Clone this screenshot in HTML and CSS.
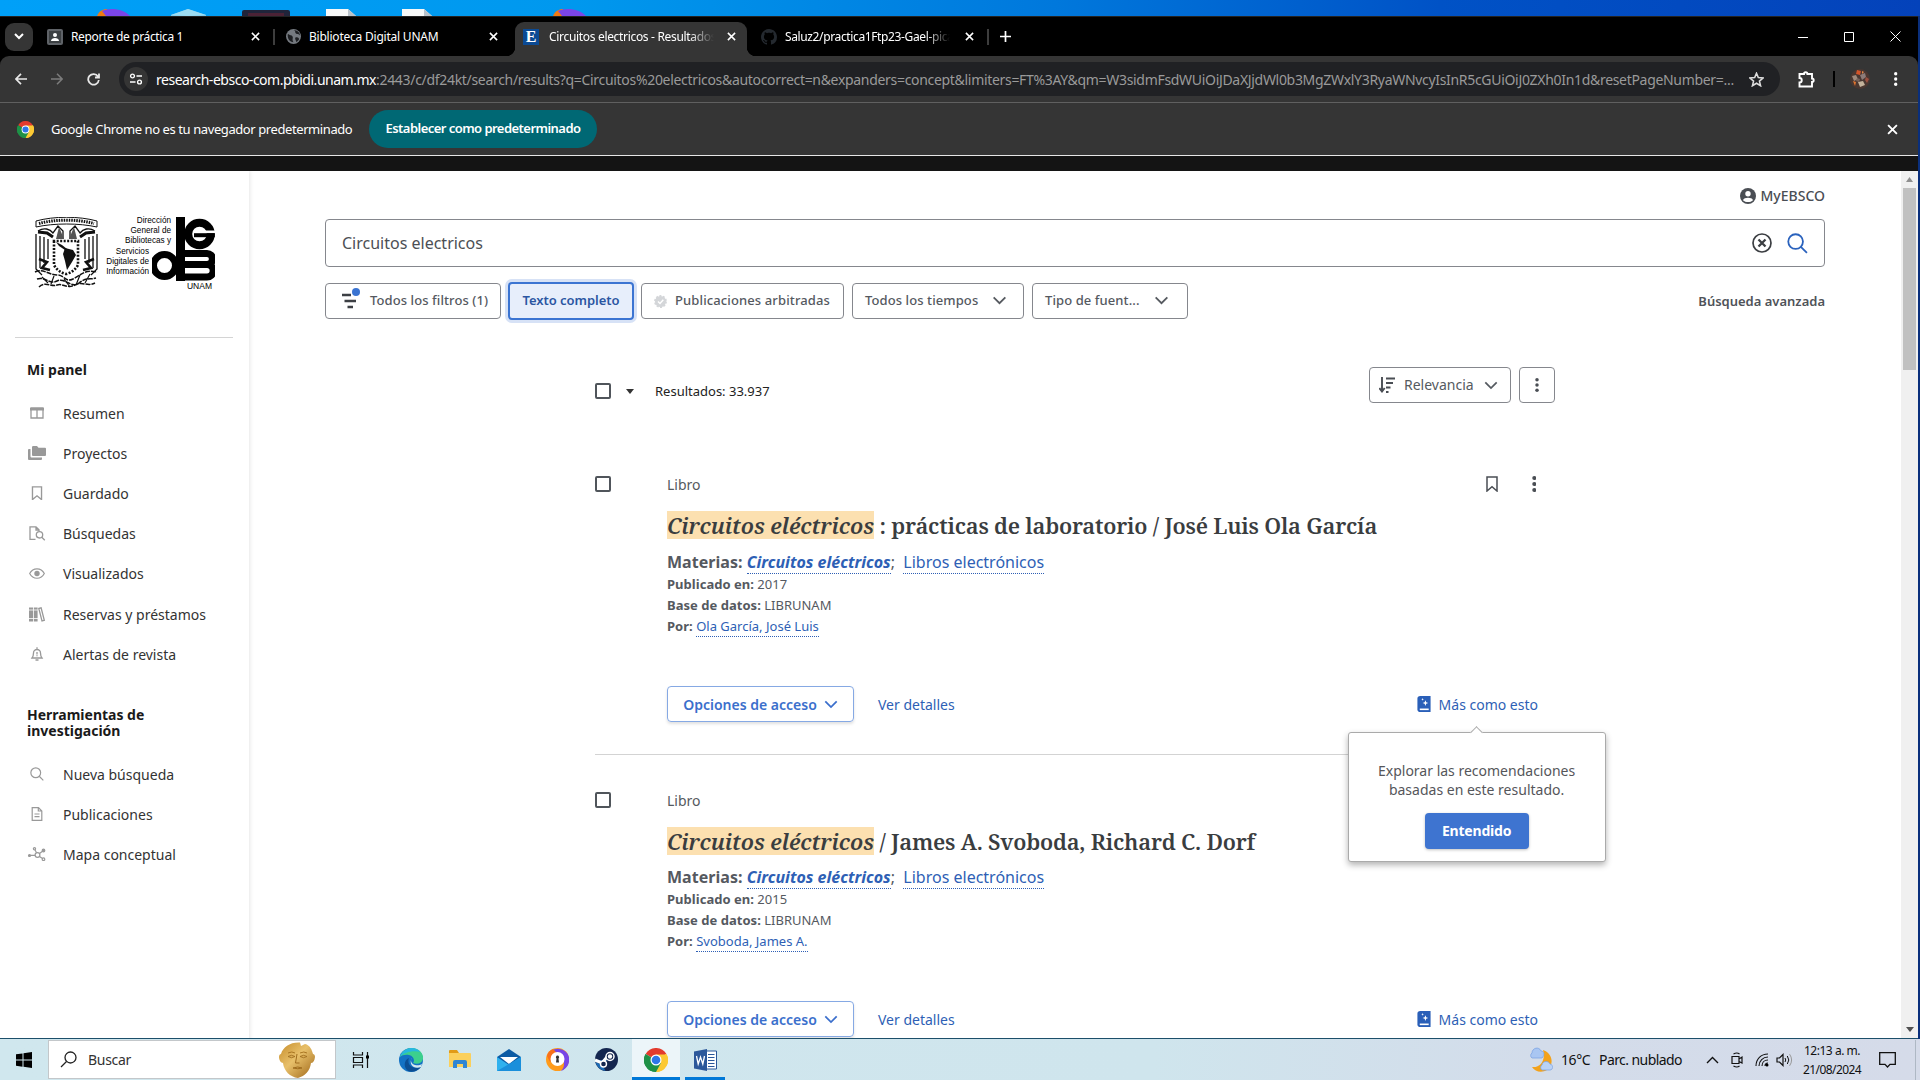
FILE: index.html
```
<!DOCTYPE html>
<html lang="es">
<head>
<meta charset="utf-8">
<title>Circuitos electricos - Resultados</title>
<link rel="stylesheet" href="styles.css">
</head>
<body>
<svg class="defs" aria-hidden="true">
  <symbol id="i-x" viewBox="0 0 10 10"><path d="M1 1l8 8M9 1l-8 8" fill="none" stroke="currentColor" stroke-width="1.7"/></symbol>
  <symbol id="i-chev" viewBox="0 0 16 10"><path d="M1.500 1.500L8 8l6.500-6.500" fill="none" stroke="currentColor" stroke-width="2"/></symbol>
  <symbol id="i-dots" viewBox="0 0 4 16"><circle cx="2" cy="2" r="2"/><circle cx="2" cy="8" r="2"/><circle cx="2" cy="14" r="2"/></symbol>
  <symbol id="i-bookmark" viewBox="0 0 12 16"><path d="M1 1h10v14l-5-4.200L1 15z" fill="none" stroke="currentColor" stroke-width="1.500"/></symbol>
  <symbol id="i-search" viewBox="0 0 20 20"><circle cx="8.200" cy="8.200" r="7"/><path d="M13.200 13.200L19 19"/></symbol>
  <symbol id="i-chrome" viewBox="0 0 24 24">
    <path d="M12 12L1.600 6A12 12 0 0 1 22.400 6z" fill="#e33b2e"/>
    <path d="M12 12L22.400 6A12 12 0 0 1 12 24z" fill="#fcc934"/>
    <path d="M12 12v12A12 12 0 0 1 1.600 6z" fill="#1e9147"/>
    <path d="M12 6.500h10.700A12 12 0 0 1 12 24l4.800-9z" fill="#fcc934"/>
    <path d="M7.200 14.800L1.600 6a12 12 0 0 0 10.400 18l4.900-9z" fill="#1e9147"/>
    <circle cx="12" cy="12" r="5.500" fill="#fff"/><circle cx="12" cy="12" r="4.300" fill="#2e76e8"/>
  </symbol>
  <symbol id="i-more" viewBox="0 0 14 17"><path d="M3 0h11v17H3a3 3 0 0 1-3-3V3a3 3 0 0 1 3-3z" fill="#2a5fb8"/><path d="M2.500 13.300H12V15H2.500z" fill="#fff"/><path d="M8.500 4.500l.8 2.200 2.200.8-2.200.8-.8 2.200-.8-2.200-2.200-.8 2.200-.8zM5.500 2.200l.4 1 1 .4-1 .4-.4 1-.4-1-1-.4 1-.4z" fill="#fff"/></symbol>
</svg>

<div class="desktop">
  <svg width="600" height="16" viewBox="0 0 600 16">
    <g><path d="M97 16c2-5 6-7 10-7l3 7z" fill="#f07a13"/><path d="M102 11c8-4 22-2 28 5h-24z" fill="#7b45e8"/></g>
    <path d="M171 15l17-6 18 6v1h-35z" fill="#7fcdec"/><path d="M171 15l17-6 18 6-18 1z" fill="#9cdcf2"/>
    <rect x="242" y="10" width="48" height="8" rx="2" fill="#20243a"/><rect x="248" y="13" width="36" height="3" fill="#4b2235"/>
    <path d="M326 9h22l8 7h-30zM402 9h22l8 7h-30z" fill="#f7f8f8"/><path d="M348 9v7h8zM424 9v7h8z" fill="#b9c2ca"/>
    <g><path d="M553 16c2-5 6-7 10-7l3 7z" fill="#f07a13"/><path d="M558 11c8-4 22-2 28 5h-24z" fill="#7b45e8"/></g>
  </svg>
</div>

<div class="window">
  <header class="tabstrip">
    <div class="tabsearch"><svg width="10" height="7" viewBox="0 0 10 7"><path d="M1 1l4 4 4-4" fill="none" stroke="#fff" stroke-width="2"/></svg></div>
    <div class="tab t1">
      <svg class="fav" width="16" height="16" viewBox="0 0 16 16"><rect width="16" height="16" rx="2" fill="#5f6368"/><rect x="2" y="2" width="12" height="12" fill="#3c4043"/><circle cx="8" cy="6" r="2" fill="#fff"/><path d="M4 12c0-4 8-4 8 0z" fill="#fff"/></svg>
      <span class="label">Reporte de práctica 1</span><svg class="x" width="9" height="9"><use href="#i-x"/></svg>
    </div>
    <i class="sep"></i>
    <div class="tab t2">
      <svg class="fav" width="15" height="15" viewBox="0 0 16 16"><circle cx="8" cy="8" r="8" fill="#757a80"/><path d="M2 5c2 2 4 1 5 3s-1 3 1 6c-4 0-7-4-6-9zM8 1c3 1 1 3 3 4s3 0 4 2c0-3-3-6-7-6zM10 9c3-1 4 1 4 2-1 2-2 2-3 3 0-2-2-3-1-5z" fill="#1d1f22"/></svg>
      <span class="label">Biblioteca Digital UNAM</span><svg class="x" width="9" height="9"><use href="#i-x"/></svg>
    </div>
    <div class="tab active">
      <span class="fav-e">E</span>
      <span class="label fade">Circuitos electricos - Resultados</span><svg class="x" width="9" height="9"><use href="#i-x"/></svg>
    </div>
    <div class="tab t4">
      <svg class="fav" width="16" height="16" viewBox="0 0 16 16"><path fill="#24292f" d="M8 0C3.580 0 0 3.580 0 8c0 3.540 2.290 6.530 5.470 7.590.4.070.55-.17.55-.38 0-.19-.01-.82-.01-1.490-2.010.37-2.530-.49-2.690-.94-.09-.23-.48-.94-.82-1.130-.28-.15-.68-.52-.01-.53.63-.01 1.080.58 1.230.82.72 1.210 1.870.87 2.330.66.070-.52.28-.87.51-1.070-1.780-.2-3.640-.89-3.640-3.950 0-.87.31-1.590.82-2.150-.08-.2-.36-1.020.08-2.120 0 0 .67-.21 2.200.82.64-.18 1.320-.27 2-.27s1.360.09 2 .27c1.530-1.040 2.200-.82 2.200-.82.44 1.100.16 1.920.08 2.120.51.56.82 1.270.82 2.150 0 3.070-1.870 3.750-3.650 3.950.29.25.54.73.54 1.480 0 1.070-.01 1.930-.01 2.200 0 .21.15.46.55.38A8 8 0 0 0 16 8c0-4.420-3.580-8-8-8z"/></svg>
      <span class="label fade">Saluz2/practica1Ftp23-Gael-pica</span><svg class="x" width="9" height="9"><use href="#i-x"/></svg>
    </div>
    <i class="sep"></i>
    <svg class="plus" width="11" height="11" viewBox="0 0 11 11"><path d="M5.500 0v11M0 5.500h11" stroke="#fff" stroke-width="1.700"/></svg>
    <div class="winbtns">
      <svg width="10" height="10"><path d="M0 5.500h10" stroke="#fff"/></svg>
      <svg width="10" height="10"><path d="M.5.5h9v9h-9z" fill="none" stroke="#fff"/></svg>
      <svg width="11" height="11"><path d="M.5.500l10 10M10.500.500l-10 10" stroke="#fff"/></svg>
    </div>
  </header>

  <div class="toolbar">
    <svg class="back" width="12" height="12" viewBox="0 0 12 12"><path d="M12 6H1M6 .8L.9 6 6 11.200" fill="none" stroke="#e8e8e8" stroke-width="1.700"/></svg>
    <svg class="fwd" width="12" height="12" viewBox="0 0 12 12"><path d="M0 6h11M6 .8L11.100 6 6 11.200" fill="none" stroke="#7c7c7c" stroke-width="1.500"/></svg>
    <svg class="reload" width="13" height="13" viewBox="0 0 13 13"><path d="M11 3.500A5.300 5.300 0 1 0 11.800 7M12 .5v4H8" fill="none" stroke="#e8e8e8" stroke-width="1.800"/></svg>
    <div class="omnibox">
      <span class="siteinfo"><svg width="14" height="12" viewBox="0 0 14 12"><path d="M7.500 3H13M1 9h5.500" stroke="#fff" stroke-width="1.500"/><circle cx="3.500" cy="3" r="1.900" fill="none" stroke="#fff" stroke-width="1.400"/><circle cx="10.500" cy="9" r="1.900" fill="none" stroke="#fff" stroke-width="1.400"/></svg></span>
      <span class="url"><b>research-ebsco-com.pbidi.unam.mx</b><span>:2443/c/df24kt/search/results?q=Circuitos%20electricos&amp;autocorrect=n&amp;expanders=concept&amp;limiters=FT%3AY&amp;qm=W3sidmFsdWUiOiJDaXJjdWl0b3MgZWxlY3RyaWNvcyIsInR5cGUiOiJ0ZXh0In1d&amp;resetPageNumber=...</span></span>
      <svg class="star" width="15" height="15" viewBox="0 0 24 24"><path d="M12 2l2.900 7 7.600.6-5.800 5 1.800 7.400L12 18l-6.500 4 1.800-7.400-5.800-5L9.100 9z" fill="none" stroke="#ddd" stroke-width="2.500"/></svg>
    </div>
    <svg class="puzzle" width="17" height="17" viewBox="0 0 17 17"><path d="M1.500 3H6a1.700 1.700 0 0 1 3.400 0H14v4.500a1.700 1.700 0 0 1 0 3.400v4.600H1.500v-4a2.200 2.200 0 0 0 0-4.500z" fill="none" stroke="#fff" stroke-width="1.900"/></svg>
    <i class="tbsep"></i>
    <svg class="avatar" width="20" height="20" viewBox="0 0 20 20"><circle cx="10" cy="10" r="10" fill="#4a3731"/><path d="M7 1l4 1-1 4-4-1z" fill="#d4552a"/><path d="M2 7l4-1 2 4-4 2z" fill="#a08b7d"/><path d="M10 6l5-2 1 4-4 3z" fill="#8d7c79"/><path d="M3 12l3 1-1 4z" fill="#e2762f"/><path d="M8 13l5-1 2 4-5 2z" fill="#c3b29b"/><path d="M16 8l3 2-2 4-2-3z" fill="#9b4f3f"/><path d="M7 9l3 1-1 3-3-1z" fill="#77635c"/><path d="M12 2l2 1-2 2z" fill="#e58a4a"/></svg>
    <svg class="menu" width="3.500" height="14" fill="#fff"><use href="#i-dots"/></svg>
  </div>

  <div class="infobar">
    <svg width="17" height="17"><use href="#i-chrome"/></svg>
    <span class="msg">Google Chrome no es tu navegador predeterminado</span>
    <span class="default">Establecer como predeterminado</span>
    <svg class="x" width="11" height="11"><use href="#i-x"/></svg>
  </div>
  <div class="blackbar"></div>

  <div class="page">
    <aside class="side">
      <div class="logo">
        <svg width="65" height="73" viewBox="0 0 65 73" fill="none" stroke="#111">
          <path d="M2 4C20-1 45-1 63 4v6C45 6 20 6 2 10z" stroke-width="1"/><path d="M5 6.500C22 2 43 2 60 6.500" stroke-width="3" stroke-dasharray="1.500 1"/>
          <path d="M4 14c6-4 12-2 15 2l5-7 5 5v8M61 14c-6-4-12-2-15 2l-5-7-5 5v8" stroke-width="1.300"/>
          <path d="M4 15l9 1 6 4M61 15l-9 1-6 4" stroke-width="3"/>
          <path d="M25 10l-3 12h8zM40 10l3 12h-8z" fill="#555" stroke="none"/>
          <path d="M2 17v35l6 6M6 19v32M10 20v26M14 22v20M63 17v35l-6 6M59 19v32M55 20v26M51 22v20" stroke-width="1.300"/>
          <path d="M20 24v24q4 7 12 9 8-2 12-9V24z" stroke-width="2.600" stroke-dasharray="2 1.500"/>
          <path d="M22 25l6 3 5 4-2 1-6-4z" fill="#111" stroke="none"/><path d="M31 31l8 2 3 5-4 7-5 8-2-9-2-7z" fill="#111" stroke="none"/>
          <path d="M5 42l8 3-5 6 8 2M60 42l-8 3 5 6-8 2" stroke-width="2.600"/>
          <path d="M1 55c8-4 14 3 22 3s8 8 16 4 12-10 24-7M3 62c8-3 12 6 20 2s14 8 22 2 10-3 17-5M5 70c6-6 12 0 18-2s10 4 18 0 12 2 20-2" stroke-width="1.500" stroke-dasharray="5 1"/>
          <path d="M8 60l6 6M20 59l-3 8M30 62l6 8M46 58l-4 10M56 57l-5 9" stroke-width="1.200"/>
        </svg>
        <div class="logotext"><span>Dirección</span><span>General de</span><span>Bibliotecas y</span><span class="in">Servicios</span><span class="in">Digitales de</span><span class="in">Información</span></div>
        <div class="mark">
          <svg width="63" height="64" viewBox="0 0 63 64"><rect x="24" width="9" height="64"/><circle cx="12.500" cy="48.500" r="11" fill="#fff" stroke="#000" stroke-width="7"/><circle cx="47.500" cy="17" r="11.300" fill="#fff" stroke="#000" stroke-width="8"/><path d="M46 13.500h17v2.700H46z" fill="#fff"/><path d="M42 16.200h20.800v4H42z"/><path d="M33 36.500h22a4.500 4.500 0 0 1 0 11H33M33 47.500h22a6 6 0 0 1 0 12.500H33" fill="none" stroke="#000" stroke-width="7.200"/><path d="M31 45h24v5H31z"/></svg>
          <span>UNAM</span>
        </div>
      </div>
      <hr>
      <h2>Mi panel</h2>
      <ul>
        <li><svg width="14" height="12" viewBox="0 0 14 12"><path d="M1 1h12v10H1zM7 3v8" fill="none" stroke="#999" stroke-width="1.300"/><path d="M0 1h14v2.500H0z" fill="#999"/></svg>Resumen</li>
        <li><svg width="18" height="14" viewBox="0 0 18 14" fill="#999"><path d="M4 1.200A1.200 1.200 0 0 1 5.200 0H9l1.500 1.800H17a1 1 0 0 1 1 1V9a1 1 0 0 1-1 1H5a1 1 0 0 1-1-1z"/><path d="M0 4a1 1 0 0 1 1-1h1.500v7.500a1 1 0 0 0 1 1H14V13a1 1 0 0 1-1 1H1a1 1 0 0 1-1-1z"/></svg>Proyectos</li>
        <li><svg width="11" height="14.500" color="#999"><use href="#i-bookmark"/></svg>Guardado</li>
        <li><svg width="16" height="15" viewBox="0 0 16 15" fill="none" stroke="#999" stroke-width="1.300"><path d="M6.500 13.300H1V.8h6l3 3V5M7 .8V4h3"/><circle cx="10.500" cy="8.800" r="3.200"/><path d="M12.800 11.200l3 3"/></svg>Búsquedas</li>
        <li><svg width="16" height="11" viewBox="0 0 16 11"><path d="M.7 5.500C4-.8 12-.8 15.300 5.500 12 11.800 4 11.800.7 5.500z" fill="none" stroke="#999" stroke-width="1.200"/><circle cx="8" cy="5.500" r="2.700" fill="#999"/></svg>Visualizados</li>
        <li class="gap1"><svg width="16" height="15" viewBox="0 0 16 15"><path d="M0 .5h4v14H0zM4.800.5h3.800v14H4.800z" fill="#999"/><path d="M0 3h9M0 11.500h9" stroke="#fff" stroke-width=".8"/><path d="M9.800 1.500l2.300-.6 3.200 12.500-2.300.6z" fill="none" stroke="#999" stroke-width="1.300"/></svg>Reservas y préstamos</li>
        <li><svg width="12" height="14" viewBox="0 0 12 14"><path d="M1 11c1.500-2 1.500-3 1.500-5a3.500 3.500 0 0 1 7 0c0 2 0 3 1.500 5zM6 .2v2M4.500 13h3M6 5v2.500M6 8.300v1" fill="none" stroke="#999" stroke-width="1.300"/></svg>Alertas de revista</li>
      </ul>
      <h2 class="second">Herramientas de investigación</h2>
      <ul>
        <li><svg width="14" height="14" fill="none" stroke="#999" stroke-width="1.700"><use href="#i-search"/></svg>Nueva búsqueda</li>
        <li><svg width="11" height="14" viewBox="0 0 11 14"><path d="M.7.700H7l3.300 3.300v9.300H.7zM6.800.800V4H10M3 7h5M3 9.700h5" fill="none" stroke="#999" stroke-width="1.200"/></svg>Publicaciones</li>
        <li><svg width="18" height="14" viewBox="0 0 18 14" fill="none" stroke="#999" stroke-width="1.200"><circle cx="9.500" cy="8" r="2.400"/><circle cx="6.500" cy="1.800" r="1.100"/><circle cx="15.500" cy="3.500" r="1.300" fill="#999"/><circle cx="15.500" cy="12.200" r="1.300"/><circle cx="1.500" cy="8.500" r="1" fill="#999"/><path d="M2.500 8.400h4.600M7 3l1.600 2.700M11.500 6.500l3-2.200M11.500 9.500l3 2"/></svg>Mapa conceptual</li>
      </ul>
    </aside>

    <main>
      <div class="account"><svg width="16" height="16" viewBox="0 0 16 16"><circle cx="8" cy="8" r="8" fill="#4a4e54"/><circle cx="8" cy="5.800" r="2.700" fill="#fff"/><path d="M3 12.200c1-3.200 9-3.200 10 0-2.500 2.500-7.500 2.500-10 0z" fill="#fff"/></svg>MyEBSCO</div>
      <div class="searchbox"><span>Circuitos electricos</span>
        <svg class="clear" width="20" height="20" viewBox="0 0 20 20"><circle cx="10" cy="10" r="9" fill="none" stroke="#3b3e42" stroke-width="1.700"/><path d="M6.500 6.500l7 7M13.500 6.500l-7 7" stroke="#3b3e42" stroke-width="2.300"/></svg>
        <svg width="21" height="21" fill="none" stroke="#2a62bd" stroke-width="1.700"><use href="#i-search"/></svg>
      </div>
      <div class="filters">
        <div class="fbtn all"><svg width="20" height="22" viewBox="0 0 20 22"><path d="M1 7h9M3.500 13h11.500M6.500 19h5.500" stroke="#3c3f44" stroke-width="2.600"/><circle cx="15" cy="4" r="4" fill="#3b74d2"/></svg><span>Todos los filtros (1)</span></div>
        <div class="fbtn on">Texto completo</div>
        <div class="fbtn peer"><svg width="13" height="13" viewBox="0 0 13 13"><circle cx="6.500" cy="6.500" r="5.500" fill="#d4d6d9" stroke="#d4d6d9" stroke-width="1.800" stroke-dasharray="2 1.450"/><path d="M4 6.500l2 2 3.300-3.800" fill="none" stroke="#fff" stroke-width="1.400"/></svg>Publicaciones arbitradas</div>
        <div class="fbtn time">Todos los tiempos<svg width="15" height="9"><use href="#i-chev"/></svg></div>
        <div class="fbtn type">Tipo de fuent...<svg width="15" height="9"><use href="#i-chev"/></svg></div>
        <span class="adv">Búsqueda avanzada</span>
      </div>

      <section class="results">
        <div class="rhead">
          <div class="rleft"><i class="cb"></i><svg class="caret" width="8" height="5"><path d="M0 0h8L4 5z" fill="#333"/></svg><span>Resultados: 33.937</span></div>
          <div class="sort"><svg width="16" height="16" viewBox="0 0 16 16"><path d="M3 0v14M.3 11L3 14.500 5.700 11M7 1.500h9M7 6h7M7 10.500h4.500M7 15h2.500" fill="none" stroke="#4a4e54" stroke-width="1.900"/></svg><span>Relevancia</span><svg class="chev" width="14" height="9"><use href="#i-chev"/></svg></div>
          <div class="kebab"><svg width="4" height="14"><use href="#i-dots"/></svg></div>
        </div>

        <article>
          <i class="cb"></i>
          <div class="body">
            <div class="meta"><span>Libro</span><svg width="12" height="16"><use href="#i-bookmark"/></svg><svg class="d" width="4.500" height="16"><use href="#i-dots"/></svg></div>
            <h3><em>Circuitos eléctricos</em> : prácticas de laboratorio / José Luis Ola García</h3>
            <p class="subj"><b>Materias:</b> <a class="bi">Circuitos eléctricos</a>; &nbsp;<a>Libros electrónicos</a></p>
            <p><b>Publicado en:</b> 2017</p>
            <p><b>Base de datos:</b> LIBRUNAM</p>
            <p><b>Por:</b> <a>Ola García, José Luis</a></p>
            <div class="actions">
              <div class="access">Opciones de acceso<svg width="14" height="9"><use href="#i-chev"/></svg></div><span class="det">Ver detalles</span>
              <div class="similar"><svg width="14" height="16"><use href="#i-more"/></svg>Más como esto
                <div class="pop"><i class="tip"></i>Explorar las recomendaciones<br>basadas en este resultado.<span class="ok">Entendido</span></div>
              </div>
            </div>
          </div>
        </article>

        <article class="next">
          <i class="cb"></i>
          <div class="body">
            <div class="meta"><span>Libro</span></div>
            <h3><em>Circuitos eléctricos</em> / James A. Svoboda, Richard C. Dorf</h3>
            <p class="subj"><b>Materias:</b> <a class="bi">Circuitos eléctricos</a>; &nbsp;<a>Libros electrónicos</a></p>
            <p><b>Publicado en:</b> 2015</p>
            <p><b>Base de datos:</b> LIBRUNAM</p>
            <p><b>Por:</b> <a>Svoboda, James A.</a></p>
            <div class="actions">
              <div class="access">Opciones de acceso<svg width="14" height="9"><use href="#i-chev"/></svg></div><span class="det">Ver detalles</span>
              <div class="similar"><svg width="14" height="16"><use href="#i-more"/></svg>Más como esto</div>
            </div>
          </div>
        </article>
      </section>
    </main>
    <div class="scroll"><svg width="7" height="5"><path d="M0 5h7L3.500 0z" fill="#8f8f8f"/></svg><i></i><svg class="down" width="8" height="5"><path d="M0 0h8L4 5z" fill="#505050"/></svg></div>
  </div>
</div>

<footer class="taskbar">
  <svg class="start" width="16" height="16" viewBox="0 0 16 16"><path d="M0 2.300L6.500 1.400V7.500H0zM7.500 1.200L16 0v7.500H7.500zM0 8.500h6.500v6.200L0 13.700zM7.500 8.500H16V16l-8.500-1.200z"/></svg>
  <div class="tsearch"><svg width="17" height="17" viewBox="0 0 17 17"><circle cx="10.500" cy="6.500" r="5.500" fill="none" stroke="#222" stroke-width="1.300"/><path d="M6.500 10.500L1 16" stroke="#222" stroke-width="1.300"/></svg><span>Buscar</span>
    <svg class="mask" width="38" height="36" viewBox="0 0 38 36"><defs><linearGradient id="g" x2="1" y2="1"><stop offset="0" stop-color="#c68c2a"/><stop offset=".45" stop-color="#e8c06a"/><stop offset="1" stop-color="#9c6416"/></linearGradient></defs><path d="M1 15c0-2 1-3 2-3C5 5 12 0 22 .5l1 3.500 4-2c5 1 7 6 8 10 1 0 2 1 2 3-.5 4-2 6-4 6-1 8-6 13-13 15C12 35 6 29 5 21c-2 0-4-3-4-6z" fill="url(#g)"/><path d="M10 11q4-2 7 0M22 11q4-2 7 0" fill="none" stroke="#a87522" stroke-width="1"/><path d="M10 14.500q3.500-2.500 7 0-3.500 2.500-7 0M22 14.500q3.500-2.500 7 0-3.500 2.500-7 0" fill="#dcae52" stroke="#9a6a1f" stroke-width=".8"/><path d="M19 12l-1.500 9h4M15 26q5-2 9 0-4 1.500-9 0" fill="none" stroke="#a06d1e" stroke-width="1"/></svg>
  </div>
  <div class="apps">
    <span><svg width="18" height="16" viewBox="0 0 18 16"><path d="M1.500 0v3h9V0M1.500 16v-3h9v3M1.500 5.500h9v5h-9zM15.500 0v16" fill="none" stroke="#111" stroke-width="1.200"/><path d="M14 3.500h3v3h-3z"/></svg></span>
    <span class="edge"><svg width="24" height="24" viewBox="0 0 24 24"><circle cx="12" cy="12" r="12" fill="#1372c4"/><path d="M1 9C3 2 9 0 13 0c7 0 12 6 11 11-1 4-5 6-10 4 2-2 1-7-4-8-4-.5-7 0-9 2z" fill="#3ccf8e"/><path d="M1 9C3 2 9 0 13 0c3 0 6 1 8 4C15 2 5 4 1 9z" fill="#27b7e0"/><path d="M10 10c-2 5 1 10 8 10l4-1c-3 4-9 6-13 4C4 19 5 12 10 10z" fill="#0b4f94"/><path d="M13 10c-2 2-1 6 3 7 3 .8 5 0 7-1l-1 3c-7 3-13-3-9-9z" fill="#d4e9ee"/></svg></span>
    <span><svg width="22" height="19" viewBox="0 0 22 19"><path d="M0 1a1 1 0 0 1 1-1h7l2 3H0z" fill="#e19b17"/><path d="M0 3h21a1 1 0 0 1 1 1v13H0z" fill="#fbd05c"/><path d="M4 18v-6a2 2 0 0 1 2-2h10a2 2 0 0 1 2 2v6h-4v-4H8v4z" fill="#2f86d4"/></svg></span>
    <span><svg width="24" height="22" viewBox="0 0 24 22"><path d="M0 8L12 0l12 8v13H0z" fill="#0c5ba4"/><path d="M3 8h18l-9 7z" fill="#fff"/><path d="M0 8l12 8L24 8v14H0z" fill="#2fb1ee"/><path d="M0 22L24 8v14z" fill="#1a8fdb"/></svg></span>
    <span><svg width="23" height="23" viewBox="0 0 23 23"><circle cx="11.500" cy="11.500" r="11.500" fill="#ff9b1a"/><path d="M5 3c9-6 20 1 18 11-1 5-5 8-8 9 5-5 5-14-10-20z" fill="#7746e6"/><path d="M1 8c1-4 3-6 6-7l5 5-8 8z" fill="#f9701b"/><circle cx="11.500" cy="11" r="7" fill="#fff"/><path d="M11.500 7.500a1.700 1.700 0 0 1 1 3l.5 4h-3l.5-4a1.700 1.700 0 0 1 1-3z" fill="#333"/></svg></span>
    <span><svg width="23" height="23" viewBox="0 0 23 23"><circle cx="11.500" cy="11.500" r="11.500" fill="#14264f"/><path d="M.5 13l7 3 6-5M.5 14a11.500 11.500 0 0 0 10 9l-3-6z" fill="#1c6bb5"/><path d="M0 12l7 3 5-6" fill="none" stroke="#fff" stroke-width="3"/><circle cx="15" cy="8.500" r="4" fill="#14264f" stroke="#fff" stroke-width="1.500"/><circle cx="15" cy="8.500" r="2.200" fill="#fff"/><circle cx="8.500" cy="16" r="3" fill="#14264f" stroke="#fff" stroke-width="1.400"/></svg></span>
    <span class="cur"><svg width="24" height="24"><use href="#i-chrome"/></svg></span>
    <span class="run"><svg width="23" height="22" viewBox="0 0 23 22"><path d="M12 2h10.500v18H12z" fill="#fff" stroke="#2b579a"/><path d="M14 5.500h6.500M14 8.500h6.500M14 11.500h6.500M14 14.500h6.500M14 17.500h6.500" stroke="#2b579a"/><path d="M0 2.500L13 0v22L0 19.500z" fill="#2b579a"/><path d="M2.500 7l1.700 8L6.500 8l2.300 7 1.700-8" fill="none" stroke="#fff" stroke-width="1.300"/></svg></span>
  </div>
  <div class="tray">
    <svg width="24" height="25" viewBox="0 0 24 25"><path d="M14 3c9 3 12 14 4 20-5 3-12 2-15-3 8 1 14-6 11-17z" fill="#f3a21b"/><path d="M3 11a3 3 0 0 1 0-5c0-5 7-7 9-2 3 0 4 4 1 7z" fill="#a9c6f2" stroke="#7fa4e3" stroke-width=".8"/><path d="M13 23a3 3 0 0 1 0-5c1-5 7-4 8-1 4 1 3 6 0 6z" fill="#b9d2f7" stroke="#7fa4e3" stroke-width=".8"/></svg>
    <span class="temp">16°C</span><span class="wx">Parc. nublado</span>
    <svg class="up" width="13" height="8" viewBox="0 0 13 8"><path d="M1 7l5.500-5.500L12 7" fill="none" stroke="#111" stroke-width="1.400"/></svg>
    <svg class="cam" width="12" height="16" viewBox="0 0 12 16"><path d="M1 4.500h7v7H1zM8 7l3-2v6L8 9.500M2.500 2q3.500-2 6 0M2.500 14q3.500 2 6 0" fill="none" stroke="#111" stroke-width="1.200"/></svg>
    <svg class="wifi" width="14" height="14" viewBox="0 0 14 14"><path d="M1 13C1 6 6 1 13 1M4 13c0-5 4-9 9-9M7 13c0-3.500 2.500-6 6-6M10 13c0-2 1-3 3-3" fill="none" stroke="#111" stroke-width="1.100"/><circle cx="12" cy="12" r="1.500"/></svg>
    <svg class="vol" width="17" height="14" viewBox="0 0 17 14"><path d="M1 5h2.500L7 1.500v11L3.500 9H1z" fill="none" stroke="#111" stroke-width="1.200"/><path d="M9 5q1.500 2 0 4M11.300 3q3 4 0 8" fill="none" stroke="#111"/><path d="M13.600 1.200q4 5.800 0 11.600" fill="none" stroke="#999"/></svg>
    <div class="clock"><span class="time12">12:13 a. m.</span><span>21/08/2024</span></div>
    <svg class="note" width="17" height="16" viewBox="0 0 17 16"><path d="M.7.700h15.600v11.600H11L8.500 15 6 12.300H.7z" fill="none" stroke="#111" stroke-width="1.300"/></svg>
    <i class="peek"></i>
  </div>
</footer>
</body>
</html>
```
FILE: styles.css
```
*{box-sizing:border-box}
body{margin:0;width:1920px;height:1080px;overflow:hidden;display:flex;flex-direction:column;background:#0a2f7c;font-family:"Noto Sans","Open Sans",sans-serif;font-size:14px;color:#555a60}
svg{display:block;flex:none}
p,h2,h3,ul{margin:0;padding:0}
.defs{display:none}
.desktop{height:16px;background:linear-gradient(90deg,#00a0f8,#0098ee 30%,#0078dc 55%,#0052c6 75%,#0442ba)}
.window{width:1918px;height:1023px;display:flex;flex-direction:column;border-top:1px solid #222;background:#000}

/* Browser tabs */
.tabstrip{height:39px;background:#000;display:flex;align-items:center;padding-left:5px;color:#fff;font-size:12px}
.tabsearch{width:28px;height:28px;border-radius:9px;background:#353535;display:flex;align-items:center;justify-content:center;margin-right:14px}
.tab{display:flex;align-items:center;white-space:nowrap}
.tab .fav{margin-right:8px}
.tab .x{margin-left:auto}
.t1{width:213px;letter-spacing:-.37px}
.t2{width:212px;letter-spacing:-.22px;margin-left:11px}
.sep{width:2px;height:16px;background:#3d3d3d;margin-left:13px}
.active{position:relative;width:232px;height:34px;align-self:flex-end;margin-left:17px;padding:0 11px 5px 8px;background:#353535;border-radius:9px 9px 0 0;letter-spacing:-.32px}
.active::before,.active::after{content:"";position:absolute;bottom:0;width:9px;height:9px}
.active::before{left:-9px;background:radial-gradient(circle at 0 0,#000 9px,#353535 9.500px)}
.active::after{right:-9px;background:radial-gradient(circle at 100% 0,#000 9px,#353535 9.500px)}
.fav-e{width:16px;height:16px;margin-right:10px;background:#0b4a94;font:700 16px/16px "Liberation Serif",serif;text-align:center}
.fade{width:165px;overflow:hidden;-webkit-mask-image:linear-gradient(90deg,#000 85%,transparent);mask-image:linear-gradient(90deg,#000 85%,transparent)}
.t4{width:213px;margin-left:14px;letter-spacing:-.37px}
.plus{margin-left:11px}
.winbtns{margin-left:auto;display:flex;align-items:center;gap:36px;padding-right:17px}

/* Address bar and notice */
.toolbar{height:46px;background:#353535;display:flex;align-items:center;padding-left:15px;border-radius:9px 9px 0 0}
.fwd{margin-left:24px}
.reload{margin-left:24px}
.omnibox{width:1661px;height:34px;margin-left:19px;border-radius:17px;background:#202124;display:flex;align-items:center;padding-left:5px}
.siteinfo{width:24px;height:24px;border-radius:12px;background:#353535;display:flex;align-items:center;justify-content:center}
.url{width:1588px;margin-left:8px;white-space:nowrap;color:#9a9a9a;letter-spacing:-.311px}
.url b{font-weight:400;color:#fff;letter-spacing:-.484px}
.star{margin-left:5px}
.puzzle{margin-left:18px}
.tbsep{width:2px;height:16px;background:#000;margin-left:18px}
.avatar{margin-left:15px}
.menu{margin-left:24px}
.infobar{height:54px;background:#353535;border-top:1px solid #606060;border-bottom:1px solid #e6e6e6;display:flex;align-items:center;padding:0 20px 0 17px;font-size:13px;color:#fff;white-space:nowrap}
.msg{width:318px;margin-left:17px;letter-spacing:-.412px}
.default{width:228px;height:38px;border-radius:19px;background:#006874;font-weight:600;letter-spacing:-.54px;line-height:37px;text-align:center}
.infobar .x{margin-left:auto}
.blackbar{height:15px;background:#141414;flex:none}

/* Sidebar */
.page{height:868px;display:flex;background:#fff;border-bottom:1px solid #1c4f6a;overflow:hidden}
.side{width:249px;margin-right:1px;flex:none;height:880px;box-shadow:1px 0 4px rgba(0,0,0,.1);color:#333}
.logo{display:flex;height:165px;padding:46px 0 0 34px}
.logotext{display:flex;flex-direction:column;width:73px;margin-left:-1px;font:8.200px/10.200px "Liberation Sans",Arial,sans-serif;color:#000;text-align:right;white-space:nowrap;margin-top:-1px}
.logotext .in{margin-right:22px}
.mark{margin-left:-19px;position:relative}
.mark span{display:block;font:8.500px/10px "Liberation Sans",Arial,sans-serif;color:#000;text-align:right;padding-right:3px}
hr{margin:1px 16px 0 15px;border:0;border-top:1px solid #d4d4d4}
.side h2{margin:24px 0 0 27px;font-size:14px;line-height:16px;font-weight:700;color:#1a1a1a;height:16px}
.side ul{list-style:none;margin-top:15px}
.side li{display:flex;align-items:center;height:40px}
.side li svg{width:20px;margin:0 16px 0 27px}
.side .gap1{height:41px;padding-top:2px}
.side h2.second{margin-top:33px;width:150px;height:32px}
.side .second+ul{margin-top:15px}

/* Search area */
main{width:1651px;padding:0 76px 0 75px;flex:none}
.account{height:48px;display:flex;align-items:center;justify-content:flex-end;gap:5px;font-weight:500;color:#4a4e54;padding-top:1px}
.searchbox{height:48px;border:1px solid #85878d;border-radius:4px;display:flex;align-items:center;padding:0 16px;font-size:16px;color:#4c4f54}
.clear{margin-left:auto;margin-right:15px}
.filters{display:flex;align-items:center;height:36px;margin-top:16px;font-size:13px;font-weight:500;white-space:nowrap}
.fbtn{height:36px;border:1px solid #85878d;border-radius:4px;display:flex;align-items:center;color:#55595f;margin-right:8px;padding-bottom:2px;letter-spacing:.09px}
.fbtn.all{width:176px;padding-left:15px}
.fbtn.all svg{margin:-2px 9px 0 0}
.fbtn.on{width:126px;height:38px;border:2px solid #3b74d2;background:#e7eefb;color:#2b56a2;font-weight:600;justify-content:center;box-shadow:0 0 0 3px #d7e2f6;letter-spacing:-.04px;margin-right:7px;margin-left:-1px}
.fbtn.peer{width:203px;padding-left:12px;letter-spacing:.12px}
.fbtn.peer svg{margin-right:8px;margin-top:3px}
.fbtn.time{width:172px;padding-left:12px}
.fbtn.type{width:156px;padding-left:12px}
.fbtn.time svg{margin-left:auto;margin-right:16px}
.fbtn.type svg{margin-left:auto;margin-right:18px}
.adv{margin-left:auto;font-weight:600;color:#4f5359}

/* Results */
.results{width:960px;margin:48px 0 0 270px}
.rhead{display:flex;height:36px}
.rleft{display:flex;align-items:center;padding-top:12px;margin-right:auto;font-size:13px;color:#222}
.caret{margin:0 21px 0 15px}
.cb{width:16px;height:16px;border:2px solid #50555b;border-radius:2px;flex:none}
.sort{width:142px;border:1px solid #85878d;border-radius:4px;display:flex;align-items:center;padding:0 12px 0 9px}
.sort span{margin:-1px 0 0 9px}
.chev{margin-left:auto}
.kebab{width:36px;margin-left:8px;border:1px solid #85878d;border-radius:4px;display:flex;align-items:center;justify-content:center;fill:#4a4e54}
article{display:flex;padding-top:37px;margin-top:36px;height:316px;border-bottom:1px solid #d3d3d3}
article.next{margin-top:0;height:330px}
article .body{margin-left:56px;width:888px}
.meta{display:flex;align-items:flex-start;height:24px}
.meta span{margin:-1px auto 0 0;line-height:20px}
.meta svg{margin-right:34px;color:#4a4e54}
.meta .d{margin-right:19px;fill:#4a4e54}
h3{font:600 22px/30px "Noto Serif","DejaVu Serif",serif;color:#3a3d3f;margin-top:10px;height:39px;letter-spacing:-.22px;white-space:nowrap}
.next h3{height:38px}
h3 em{display:inline-block;height:28px;line-height:28px;background:#fce0b0;letter-spacing:-.08px}
article p{font-size:13px;line-height:21px;height:21px;color:#55595f}
article p b{font-weight:700;letter-spacing:.03px}
article p.subj{font-size:16px;line-height:24px;height:25px;padding-top:1px}
article a{color:#2e5fb5;border-bottom:1px dotted #2e5fb5;display:inline-block;line-height:18px;padding-bottom:1px}
.subj a{line-height:22px;padding-bottom:0}
a.bi{font-weight:700;font-style:italic}
.actions{display:flex;align-items:center;height:36px;margin-top:49px;color:#2e5fb5}
.access{width:187px;height:36px;border:1px solid #86a9e4;border-radius:4px;box-shadow:0 2px 3px rgba(0,0,0,.12);display:flex;align-items:center;justify-content:center;gap:7px;font-weight:600;color:#3b6fcc}
.det{margin-left:24px}
.similar{position:relative;display:flex;align-items:center;gap:8px;margin-left:auto;margin-right:17px}
.pop{position:absolute;left:-69px;top:37px;width:258px;height:130px;background:#fff;border:1px solid #aaa;border-radius:3px;box-shadow:0 3px 6px rgba(0,0,0,.3);text-align:center;line-height:19px;padding-top:28px;color:#55565a;z-index:2}
.tip{position:absolute;left:123px;top:-5px;width:9px;height:9px;background:#fff;border:1px solid #aaa;border-right:0;border-bottom:0;transform:rotate(45deg)}
.ok{display:block;width:104px;height:36px;line-height:35px;margin:14px auto 0;background:#3e74d0;color:#fff;font-weight:700;border-radius:4px;letter-spacing:-.2px;box-shadow:0 1px 3px rgba(0,0,0,.25)}
.scroll{width:17px;background:#f0f0f0;display:flex;flex-direction:column;align-items:center;padding:6px 0}
.scroll i{width:13px;height:182px;background:#c1c1c1;margin-top:6px}
.scroll .down{margin-top:auto}

/* Taskbar */
.taskbar{height:41px;display:flex;align-items:center;background:linear-gradient(90deg,#d0e7ee,#cfe5ed 60%,#d3dcea 80%,#d5dbe9);color:#111}
.start{margin:0 16px}
.tsearch{width:288px;height:39px;border:1px solid #c3c7ca;background:#fff;display:flex;align-items:center;padding:0 19px 0 11px;color:#333}
.tsearch span{margin-left:11px;letter-spacing:-.3px}
.mask{margin-left:auto}
.apps{display:flex;height:41px}
.apps span{width:49px;display:flex;align-items:center;justify-content:center}
.apps .edge{margin-left:1px}
.apps .cur{width:48px;margin-left:1px;background:#ecf5f9;border-bottom:3px solid #0078d7;padding-top:3px}
.apps .run{width:40px;margin-left:5px;border-bottom:3px solid #0078d7;padding-top:3px}
.tray{margin-left:auto;display:flex;align-items:center;height:41px;width:391px}
.temp{margin-left:8px;width:38px;letter-spacing:-.4px}
.wx{width:107px;letter-spacing:-.57px;white-space:nowrap}
.cam{margin-left:12px}
.wifi{margin-left:12px}
.vol{margin-left:7px}
.clock{width:58px;margin-left:10px;font-size:12px;line-height:19px;letter-spacing:-.58px;display:flex;flex-direction:column;align-items:center;white-space:nowrap}
.time12{letter-spacing:-.48px}
.note{margin-left:18px}
.peek{width:1px;height:40px;background:#aeb8c4;margin-left:auto;margin-right:4px}
```
